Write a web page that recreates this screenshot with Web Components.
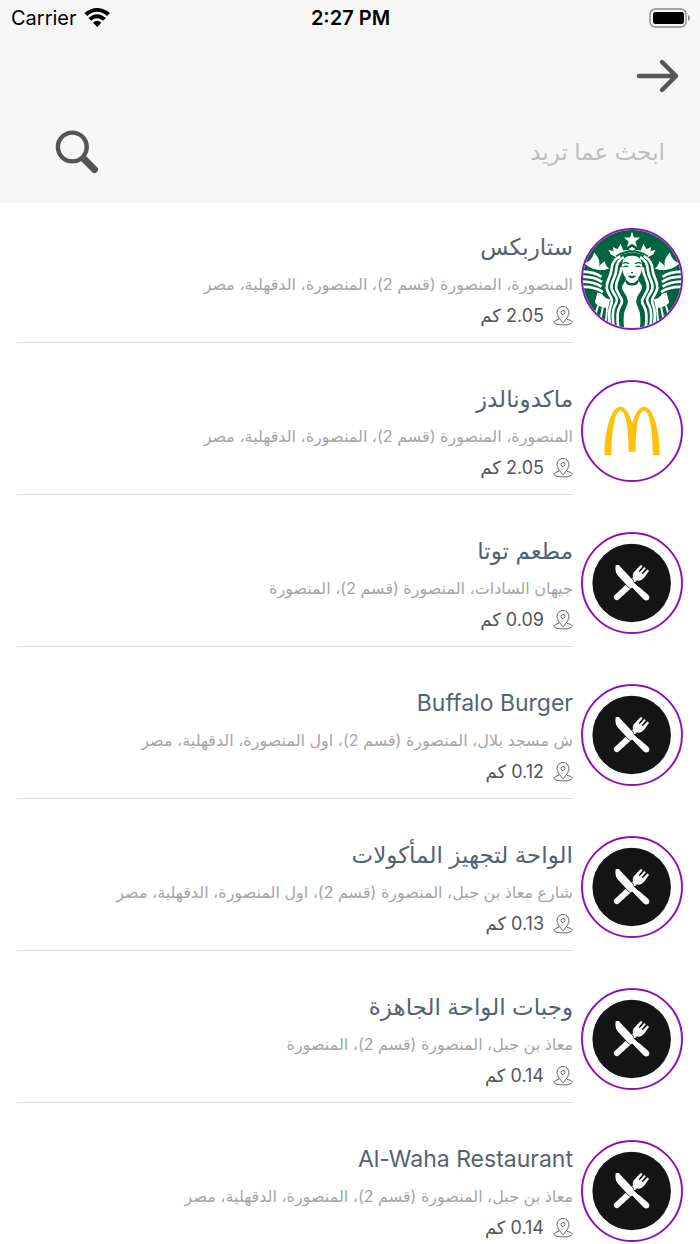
<!DOCTYPE html>
<html lang="ar" dir="rtl">
<head>
<meta charset="utf-8">
<meta name="viewport" content="width=device-width, initial-scale=1">
<title>المطاعم</title>
<style>
html, body { margin: 0; height: 100%; }
body { background: #fff; font-family: Inter, "DejaVu Sans", sans-serif; overflow: hidden; }
</style>
</head>
<body>
<nearby-app></nearby-app>

<template id="t-status">
<style>
:host { display: grid; grid-template-columns: 1fr auto 1fr; align-items: center; direction: ltr; height: 36px; padding: 0 10px 0 11px; font-size: 20px; line-height: 24px; color: #000; }
.left { display: flex; align-items: center; gap: 7px; }
.time { font-weight: 600; }
.battery { justify-self: end; }
svg { display: block; }
</style>
<span class="left"><span>Carrier</span>
<svg width="26" height="20" viewBox="252 22 78 60" aria-hidden="true"><path d="M253 37Q291 7 330 37L321 46Q291 21 262 46ZM265 52Q291 29 318 52L309 60Q291 46 274 60ZM279 66Q291 55 304 66L292 79Z"/></svg></span>
<span class="time">2:27 PM</span>
<svg class="battery" width="41" height="20" viewBox="0 0 41 20" aria-hidden="true"><rect x="1" y="1" width="36" height="18" rx="5" fill="none" stroke="#8b8b8b" stroke-width="1.4"/><rect x="4" y="4" width="31" height="12" rx="2.5"/><path d="M39 7q2 1 2 3t-2 3z" fill="#8b8b8b"/></svg>
</template>

<template id="t-search">
<style>
:host { display: block; }
form { display: flex; align-items: center; margin: 0; padding: 0 35px 0 50px; height: 56px; }
input { flex: 1; min-width: 0; border: 0; outline: 0; padding: 0; background: none; font: inherit; font-size: 23px; line-height: 32px; height: 40px; color: #555; }
input::placeholder { color: #bdbdbd; opacity: 1; }
button { border: 0; background: none; padding: 0; width: 54px; height: 54px; }
svg { display: block; }
</style>
<form role="search" onsubmit="return false">
<input type="search" aria-label="بحث" placeholder="ابحث عما تريد">
<button type="submit" aria-label="ابحث"><svg width="54" height="54" viewBox="0 0 54 54" fill="none" stroke="#555"><circle cx="22.3" cy="22" r="14.4" stroke-width="4.4"/><path d="m34 34 10.500 10.500" stroke-width="7" stroke-linecap="round"/><path d="m32 32 4 4" stroke-width="5"/></svg></button>
</form>
</template>

<template id="t-logo">
<style>
:host { display: block; box-sizing: border-box; width: 102px; height: 102px; border: 2px solid #9013b5; border-radius: 50%; overflow: hidden; background: #fff; }
svg { display: block; width: 100%; height: 100%; }
</style>
</template>

<template id="t-place">
<style>
:host { display: grid; grid-template-columns: 102px minmax(0, 1fr); column-gap: 8px; height: 152px; box-sizing: border-box; padding: 0 17px; }
place-logo { align-self: center; }
.info { display: flex; flex-direction: column; height: 140px; box-sizing: border-box; padding-top: 27px; border-bottom: 1px solid #dadada; }
h2, p { margin: 0; font-weight: 400; white-space: nowrap; }
h2 { font-size: 23px; line-height: 34px; color: #55626f; }
.address { font-size: 16px; line-height: 24px; margin-top: 8px; color: #a5a5a5; }
.distance { display: flex; align-items: center; gap: 9px; font-size: 18px; line-height: 26px; margin-top: 7px; color: #555; }
svg { display: block; }
</style>
<place-logo></place-logo>
<div class="info">
<h2><slot></slot></h2>
<p class="address"><slot name="address"></slot></p>
<p class="distance"><svg width="20" height="20" viewBox="0 0 20 20" fill="none" stroke="#666" stroke-width="1" aria-hidden="true"><path d="M10 17Q4 10 4 6.5a6 6 0 0 1 12 0Q16 10 10 17Z"/><circle cx="10" cy="6.5" r="2"/><path d="M6 13.5C2.500 14 1 15 1 16.300c0 3.500 18 3.500 18 0 0-1.300-1.500-2.300-5-2.800"/></svg><span><slot name="distance"></slot></span></p>
</div>
</template>

<template id="t-app">
<style>
:host { display: flex; flex-direction: column; height: 100vh; }
header { flex: none; background: #f7f7f7; padding-bottom: 23px; }
nav { display: flex; padding: 18px 20px 26px; }
nav button { border: 0; background: none; padding: 0; }
svg { display: block; }
main { flex: 1; min-height: 0; overflow-y: auto; scrollbar-width: none; }
</style>
<header>
<status-bar></status-bar>
<nav><button type="button" aria-label="رجوع"><svg width="44" height="44" viewBox="0 0 44 44" fill="none" stroke="#555" stroke-width="4.400" stroke-linecap="round" stroke-linejoin="round"><path d="M3 22h37M26 8l14 14-14 14"/></svg></button></nav>
<search-box></search-box>
</header>
<main>
<place-row logo="siren">ستاربكس<span slot="address">المنصورة، المنصورة (قسم 2)، المنصورة، الدقهلية، مصر</span><span slot="distance">2.05 كم</span></place-row>
<place-row logo="arches">ماكدونالدز<span slot="address">المنصورة، المنصورة (قسم 2)، المنصورة، الدقهلية، مصر</span><span slot="distance">2.05 كم</span></place-row>
<place-row>مطعم توتا<span slot="address">جيهان السادات، المنصورة (قسم 2)، المنصورة</span><span slot="distance">0.09 كم</span></place-row>
<place-row><bdi>Buffalo Burger</bdi><span slot="address">ش مسجد بلال، المنصورة (قسم 2)، اول المنصورة، الدقهلية، مصر</span><span slot="distance">0.12 كم</span></place-row>
<place-row>الواحة لتجهيز المأكولات<span slot="address">شارع معاذ بن جبل، المنصورة (قسم 2)، اول المنصورة، الدقهلية، مصر</span><span slot="distance">0.13 كم</span></place-row>
<place-row>وجبات الواحة الجاهزة<span slot="address">معاذ بن جبل، المنصورة (قسم 2)، المنصورة</span><span slot="distance">0.14 كم</span></place-row>
<place-row><bdi>Al-Waha Restaurant</bdi><span slot="address">معاذ بن جبل، المنصورة (قسم 2)، المنصورة، الدقهلية، مصر</span><span slot="distance">0.14 كم</span></place-row>
</main>
</template>

<script>
const sirenHalf = `
<path fill="#fff" d="M187 93L177 88L187 82L197 88L187 93ZM187 98Q212 98 232 113L250 104L257 90L242 94L244 82L230 88L221 72L213 92Q200 88 187 98Z"/>
<path fill="#00643f" d="M187 92Q215 92 236 108L231 113Q212 97 187 97Z"/>
<path fill="#fff" d="M255 146Q266 138 268 124Q282 132 286 143Q278 120 300 98Q306 124 328 129Q320 142 296 148Q276 154 255 146Z"/>
<g fill="none" stroke="#fff" stroke-width="8">
<path d="M278 171Q300 154 344 155M276 186Q300 168 344 170M278 200Q302 183 344 185M274 216Q300 197 344 201"/>
</g>
<path fill="#fff" d="M252 238Q268 236 276 222L290 217L298 247Q283 264 258 263Z"/>
<path fill="none" stroke="#fff" stroke-width="6" d="M261 258L265 312M274 261L282 304M288 256L298 288"/>
<g fill="none" stroke="#fff" stroke-width="8">
<path d="M211 112Q233 121 234 150C236 178 254 187 247 208C239 229 225 233 236 252Q249 272 241 325"/>
<path d="M222 109Q247 122 248 149C250 173 268 188 261 210C253 231 241 237 250 255Q258 273 253 318"/>
<path d="M219 142C219 168 239 184 234 207C225 230 209 238 222 257Q235 275 227 327"/>
</g>
<path fill="#fff" d="M187 108Q216 108 217 136Q218 158 206 173Q207 188 216 197Q220 207 208 221Q193 240 204 260Q216 282 210 328H187Z"/>
<path fill="#00643f" d="M187 189Q200 188 208 173Q208 190 200 194L187 197Z"/>
<path fill="none" stroke="#00643f" stroke-width="3.500" d="M196 132Q203 125 215 131M198 141Q206 136 213 141M190 157L187 159"/>
<path fill="#00643f" d="M187 168Q193 165 199 168Q194 175 187 175Z"/>
`;
const artwork = {
  siren: `<svg viewBox="41 31 292 292" role="img" aria-label="Starbucks"><path fill="#00643f" d="M36 26h302v302H36z"/>
    <g>${sirenHalf}</g><g transform="translate(374 0) scale(-1 1)">${sirenHalf}</g>
    <path fill="#fff" stroke="#00643f" stroke-width="4" paint-order="stroke" d="M187 36l6 17h18l-14 12 5 17-15-10-15 10 5-17-14-12h18z"/></svg>`,
  arches: `<svg viewBox="41 37 292 292" role="img" aria-label="McDonald's"><path fill="#ffc107" d="M105 255C105 178 126 111 152 111C168 111 180 132 188 160C196 132 208 111 223 111C249 111 270 178 270 255H249C249 186 239 122 223 122C209 122 198 160 198 245H177C177 160 166 122 152 122C136 122 126 186 126 255Z"/></svg>`,
  cutlery: `<svg viewBox="41 28 292 292" role="img" aria-label="مطعم"><circle cx="186" cy="174" r="117" fill="#151515"/>
    <path d="M142 216L181 180" stroke="#fff" stroke-width="18" stroke-linecap="round"/>
    <path fill="#fff" d="M190 156Q187 145 196 138L212 121Q217 120 218 124L207 139L210 142L223 127Q227 126 228 130L216 145L219 148L233 134Q238 134 237 139L223 158Q213 170 202 166L194 173L184 165Z"/>
    <path fill="#fff" stroke="#151515" stroke-width="4" paint-order="stroke" d="M138 122Q145 117 151 124L190 166Q190 173 196 176L236 210Q242 219 235 225Q228 228 222 223L189 189L179 188L144 151Q136 142 138 122Z"/></svg>`
};
function build(el, id) {
  el.attachShadow({ mode: "open" }).append(document.getElementById(id).content.cloneNode(true));
}
customElements.define("status-bar", class extends HTMLElement {
  constructor() { super(); build(this, "t-status"); }
});
customElements.define("search-box", class extends HTMLElement {
  constructor() { super(); build(this, "t-search"); }
});
customElements.define("place-logo", class extends HTMLElement {
  static observedAttributes = ["kind"];
  constructor() { super(); build(this, "t-logo"); }
  attributeChangedCallback(name, old, kind) {
    this.shadowRoot.querySelector("svg")?.remove();
    this.shadowRoot.append(document.createRange().createContextualFragment(artwork[kind]));
  }
});
customElements.define("place-row", class extends HTMLElement {
  constructor() { super(); build(this, "t-place"); }
  connectedCallback() {
    this.shadowRoot.querySelector("place-logo").setAttribute("kind", this.getAttribute("logo") || "cutlery");
  }
});
customElements.define("nearby-app", class extends HTMLElement {
  constructor() { super(); build(this, "t-app"); }
});
</script>
</body>
</html>
